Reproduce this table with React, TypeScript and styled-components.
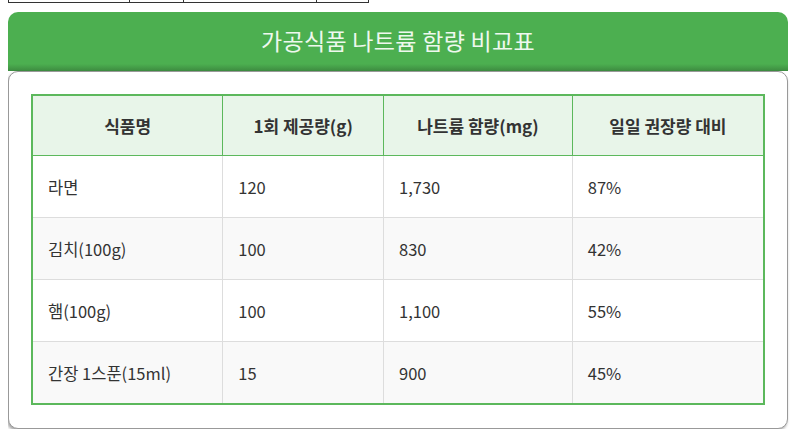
import React from 'react';
import styled, { createGlobalStyle } from 'styled-components';

const GlobalStyle = createGlobalStyle`
  body {
    margin: 0 8px;
    background: #fff;
    font-family: "Noto Sans CJK KR", "Noto Sans", sans-serif;
  }
`;

const PrevTableEdge = styled.div`
  width: 361px;
  height: 3px;
  display: grid;
  grid-template-columns: 121px 54px 133px 53px;
  border: 1px solid #333;
  border-top: none;
  box-sizing: border-box;
`;

const PrevCell = styled.div`
  border-right: 1px solid #333;
  &:last-child {
    border-right: none;
  }
`;

const Wrapper = styled.div`
  margin-top: 9px;
  width: 780px;
`;

const Header = styled.div`
  height: 59px;
  padding-bottom: 3px;
  box-sizing: border-box;
  border-radius: 10px 10px 0 0;
  background: linear-gradient(to bottom, #4caf50 0%, #4caf50 88%, #3d8b40 100%);
  display: flex;
  align-items: center;
  justify-content: center;
  color: #eef8ee;
  font-size: 23px;
  letter-spacing: 0.3px;
`;

const Card = styled.div`
  border: 1px solid #999;
  border-radius: 10px;
  box-shadow: -1px 2px 3px rgba(0, 0, 0, 0.35);
  background: #fff;
  padding: 22px 22px 23px;
`;

const Table = styled.table`
  width: 100%;
  border-collapse: collapse;
  border: 2px solid #5cb85c;
`;

const HeadCell = styled.th`
  height: 59px;
  background: #e8f5e9;
  color: #333;
  font-size: 17px;
  font-weight: 700;
  text-align: center;
  border-right: 1px solid #5cb85c;
  border-bottom: 1px solid #5cb85c;
  padding: 0 15px;
`;

const Row = styled.tr<{ $striped: boolean }>`
  background: ${({ $striped }) => ($striped ? '#f9f9f9' : '#fff')};
`;

const Cell = styled.td`
  height: 61px;
  color: #333;
  font-size: 16.5px;
  padding: 0 15px;
  border-right: 1px solid #ddd;
  border-bottom: 1px solid #ddd;
`;

const columns = ['식품명', '1회 제공량(g)', '나트륨 함량(mg)', '일일 권장량 대비'];
const widths = [191, 161, 189, 192];

const rows = [
  ['라면', '120', '1,730', '87%'],
  ['김치(100g)', '100', '830', '42%'],
  ['햄(100g)', '100', '1,100', '55%'],
  ['간장 1스푼(15ml)', '15', '900', '45%'],
];

function App() {
  return (
    <>
      <GlobalStyle />
      <PrevTableEdge>
        <PrevCell />
        <PrevCell />
        <PrevCell />
        <PrevCell />
      </PrevTableEdge>
      <Wrapper>
        <Header>가공식품 나트륨 함량 비교표</Header>
        <Card>
          <Table>
            <colgroup>
              {widths.map((w, i) => (
                <col key={i} style={{ width: w }} />
              ))}
            </colgroup>
            <thead>
              <tr>
                {columns.map((c) => (
                  <HeadCell key={c}>{c}</HeadCell>
                ))}
              </tr>
            </thead>
            <tbody>
              {rows.map((r, i) => (
                <Row key={r[0]} $striped={i % 2 === 1}>
                  {r.map((v, j) => (
                    <Cell key={j}>{v}</Cell>
                  ))}
                </Row>
              ))}
            </tbody>
          </Table>
        </Card>
      </Wrapper>
    </>
  );
}

export default App;
